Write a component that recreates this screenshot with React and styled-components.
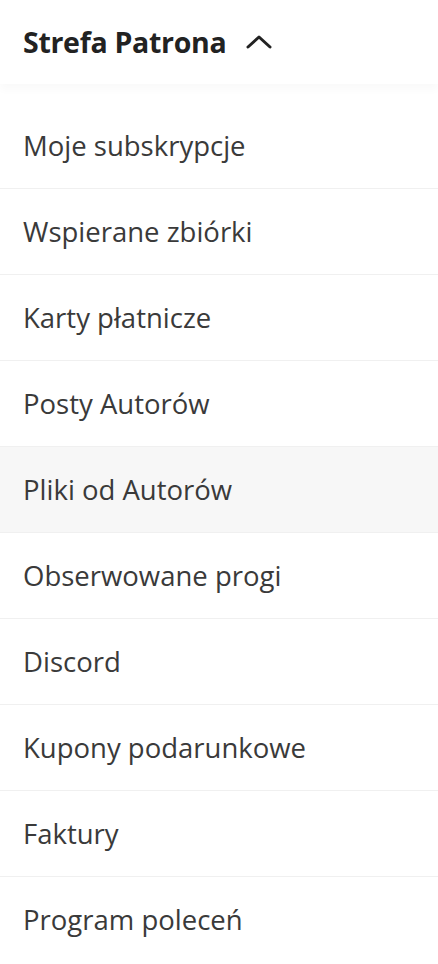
import React from 'react';
import styled, { createGlobalStyle } from 'styled-components';

const GlobalStyle = createGlobalStyle`
  html, body {
    margin: 0;
    padding: 0;
    background: #ffffff;
  }
  body {
    font-family: "Open Sans", "Noto Sans", sans-serif;
  }
`;

const items = [
  'Moje subskrypcje',
  'Wspierane zbiórki',
  'Karty płatnicze',
  'Posty Autorów',
  'Pliki od Autorów',
  'Obserwowane progi',
  'Discord',
  'Kupony podarunkowe',
  'Faktury',
  'Program poleceń',
];

const Wrapper = styled.nav`
  width: 438px;
  background: #fff;
`;

// Section header with a soft shadow underneath
const Header = styled.div`
  display: flex;
  align-items: center;
  gap: 20px;
  height: 84px;
  padding: 0 23px;
  box-sizing: border-box;
  box-shadow: 0 6px 8px rgba(0, 0, 0, 0.025);
  margin-bottom: 19px;
`;

const Title = styled.h2`
  margin: 0;
  font-size: 28.5px;
  font-weight: 700;
  color: #222;
  letter-spacing: -0.3px;
`;

const List = styled.ul`
  list-style: none;
  margin: 0;
  padding: 0;
`;

const Item = styled.li`
  display: flex;
  align-items: center;
  height: 85px;
  padding: 0 23px;
  border-bottom: 1px solid #f0f0f0;
  background: ${p => (p.$active ? '#f7f7f7' : '#fff')};
  font-size: 27.5px;
  color: #3a3a3a;
  &:last-child {
    border-bottom: none;
  }
`;

function Chevron() {
  return (
    <svg width="26" height="16" viewBox="0 0 26 16" fill="none">
      <path d="M2 13L13 3l11 10" stroke="#222" strokeWidth="3" strokeLinecap="round" strokeLinejoin="round" />
    </svg>
  );
}

export default function App() {
  return (
    <Wrapper>
      <GlobalStyle />
      <Header>
        <Title>Strefa Patrona</Title>
        <Chevron />
      </Header>
      <List>
        {items.map(label => (
          <Item key={label} $active={label === 'Pliki od Autorów'}>
            {label}
          </Item>
        ))}
      </List>
    </Wrapper>
  );
}
